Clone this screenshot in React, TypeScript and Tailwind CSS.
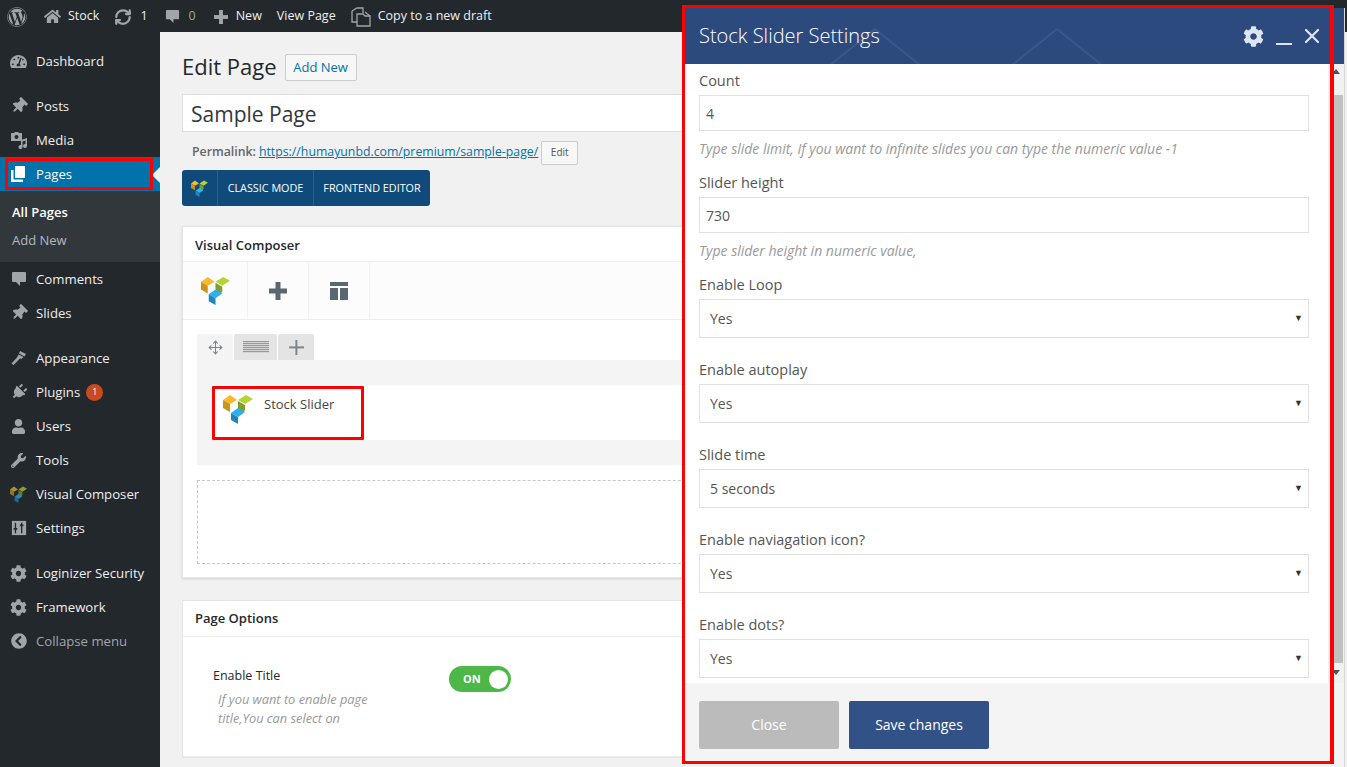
import type { ReactNode } from 'react'
import {
  FaWordpress, FaHome, FaThumbtack, FaPlug, FaUser, FaWrench, FaCog,
  FaTachometerAlt, FaChevronCircleLeft, FaPencilAlt,
} from 'react-icons/fa'
import { Move, RefreshCw, X } from 'lucide-react'

// Visual Composer cube logo
function VcLogo({ size = 30, dim = false }: { size?: number; dim?: boolean }) {
  return (
    <svg viewBox="0 0 30 30" width={size} height={size} className={dim ? 'opacity-70' : ''}>
      <path d="M0 6 L7 1 L14 6 L7 10 Z" fill="#fbb92d" />
      <path d="M0 6 L7 10 V18 L0 14 Z" fill="#c8951a" />
      <path d="M15 6 L23 1 L30 5 L22 10 Z" fill="#b5d334" />
      <path d="M15 7 L22 11 V16 L19 20 L15 17 Z" fill="#7f9f2c" />
      <path d="M8 19 L15 14 L22 18 L15 23 Z" fill="#2fb0ee" />
      <path d="M8 19 L15 23 V30 L8 26 Z" fill="#1d87bb" />
    </svg>
  )
}

function GridIcon() {
  return (
    <svg viewBox="0 0 18 18" width="18" height="18" fill="#5a6670">
      <rect x="0" y="0" width="18" height="4" />
      <rect x="0" y="6" width="8" height="12" />
      <rect x="10" y="6" width="8" height="12" />
    </svg>
  )
}

function SettingsIcon() {
  return (
    <svg viewBox="0 0 18 18" width="16" height="16">
      <rect width="16" height="16" x="1" y="1" fill="#a0a5aa" />
      <path d="M5 3v12M12 3v12" stroke="#23282d" strokeWidth="1.5" />
      <path d="M3 10h4M10 6h4" stroke="#23282d" strokeWidth="2" />
    </svg>
  )
}

function PagesIcon() {
  return (
    <svg viewBox="0 0 16 16" width="16" height="16" fill="#fff">
      <path d="M4 0h10v12H4z" />
      <path d="M0 4h2.5v9.5H12V16H0z" />
    </svg>
  )
}

function BubbleIcon({ size = 16 }: { size?: number }) {
  return (
    <svg viewBox="0 0 16 16" width={size} height={size} fill="#a0a5aa">
      <path d="M2 1h12a1 1 0 0 1 1 1v8a1 1 0 0 1-1 1H9v4l-4-4H2a1 1 0 0 1-1-1V2a1 1 0 0 1 1-1z" />
    </svg>
  )
}

function MediaIcon() {
  return (
    <svg viewBox="0 0 18 18" width="18" height="18" fill="#a0a5aa">
      <path d="M1 2h3l1-1h3l1 1h3v8H1z" />
      <circle cx="6.5" cy="6" r="2" fill="#23282d" />
      <path d="M11 9l6-2v8a2 2 0 1 1-1.5-1.9V9.5L12.5 10.5V16a2 2 0 1 1-1.5-1.9z" />
    </svg>
  )
}

function BrushIcon() {
  return (
    <svg viewBox="0 0 18 18" width="18" height="18" fill="#a0a5aa">
      <path d="M10 2l6 3-1.5 2.5-5.5-3z" />
      <path d="M8.5 5.5l5 2.5-2 2-1.5-.5L3.5 16 1.5 14.5 7 8.5z" />
    </svg>
  )
}

function CloneIcon() {
  return (
    <svg viewBox="0 0 20 20" width="20" height="20" fill="none" stroke="#a0a5aa" strokeWidth="1.3">
      <path d="M1 4l5-3h6v5" />
      <path d="M1 4v11h5" />
      <path d="M6 7h6l2 2h5v10H6z" />
      <path d="M14 5l5 4" />
    </svg>
  )
}

function PlusThin() {
  return (
    <svg viewBox="0 0 15 15" width="15" height="15" fill="currentColor">
      <rect x="6.4" y="0" width="2" height="15" />
      <rect x="0" y="6.4" width="15" height="2" />
    </svg>
  )
}

function PlusThick({ size = 18 }: { size?: number }) {
  return (
    <svg viewBox="0 0 18 18" width={size} height={size} fill="currentColor">
      <rect x="6.5" y="0" width="5" height="18" />
      <rect x="0" y="6.5" width="18" height="5" />
    </svg>
  )
}

function TrashIcon() {
  return (
    <svg viewBox="0 0 12 14" width="12" height="14" fill="none" stroke="currentColor" strokeWidth="2">
      <path d="M2 3v10h8V3" />
      <path d="M0 2h12M3 .8h6" strokeWidth="1.5" />
    </svg>
  )
}

interface NavItem {
  label: string
  icon: ReactNode
  gapBefore?: boolean
  badge?: string
  dim?: boolean
}

const icon = 'text-[#a0a5aa]'

const topNav: NavItem[] = [{ label: 'Dashboard', icon: <FaTachometerAlt size={17} className={icon} /> }]
const midNav: NavItem[] = [
  { label: 'Posts', icon: <FaThumbtack size={16} className={`${icon} rotate-45`} /> },
  { label: 'Media', icon: <MediaIcon /> },
]
const lowNav: NavItem[] = [
  { label: 'Comments', icon: <BubbleIcon /> },
  { label: 'Slides', icon: <FaThumbtack size={16} className={`${icon} rotate-45`} /> },
  { label: 'Appearance', icon: <BrushIcon />, gapBefore: true },
  { label: 'Plugins', icon: <FaPlug size={16} className={`${icon} rotate-45`} />, badge: '1' },
  { label: 'Users', icon: <FaUser size={15} className={icon} /> },
  { label: 'Tools', icon: <FaWrench size={15} className={icon} /> },
  { label: 'Visual Composer', icon: <VcLogo size={17} dim /> },
  { label: 'Settings', icon: <SettingsIcon /> },
  { label: 'Loginizer Security', icon: <FaCog size={17} className={icon} />, gapBefore: true },
  { label: 'Framework', icon: <FaCog size={17} className={icon} /> },
  { label: 'Collapse menu', icon: <FaChevronCircleLeft size={16} className={icon} />, dim: true },
]

function SideItem({ item }: { item: NavItem }) {
  return (
    <>
      {item.gapBefore && <div className="h-[11px]" />}
      <div className="flex h-[34px] items-center">
        <span className="flex w-[36px] shrink-0 justify-center pl-[1px]">{item.icon}</span>
        <span className={`pt-[2px] text-[13.2px] ${item.dim ? 'text-[#a0a5aa]' : 'text-[#eeeeee]'}`}>{item.label}</span>
        {item.badge && (
          <span className="ml-[6px] flex h-[17px] w-[17px] items-center justify-center rounded-full bg-[#ca4a1f] text-[9px] text-white">
            {item.badge}
          </span>
        )}
      </div>
    </>
  )
}

function Sidebar() {
  return (
    <aside className="w-[160px] shrink-0 bg-[#23282d] pt-[12px]">
      {topNav.map((n) => <SideItem key={n.label} item={n} />)}
      <div className="h-[11px]" />
      {midNav.map((n) => <SideItem key={n.label} item={n} />)}
      <div className="relative flex h-[34px] items-center bg-[#0073aa]">
        <span className="flex w-[36px] justify-center pl-[1px]"><PagesIcon /></span>
        <span className="pt-[2px] text-[13.2px] text-white">Pages</span>
        <span className="absolute right-0 top-[10px] h-0 w-0 border-y-[8px] border-r-[8px] border-y-transparent border-r-[#f1f1f1]" />
        <span className="absolute left-[5px] right-[7px] top-[1px] bottom-[1px] border-[3px] border-[#ff0000]" />
      </div>
      <div className="flex h-[71px] flex-col bg-[#32373c] pl-[12px] pt-[7px] text-[13px]">
        <span className="flex h-[28px] items-center pt-[2px] font-semibold text-white">All Pages</span>
        <span className="flex h-[28px] items-center pt-[2px] text-[#b4b9be]">Add New</span>
      </div>
      {lowNav.map((n) => <SideItem key={n.label} item={n} />)}
    </aside>
  )
}

function TopBar() {
  return (
    <header className="flex h-[32px] items-center bg-[#23282d] pt-[1px] text-[12.5px] text-[#eeeeee]">
      <span className="ml-[7px] text-[#a0a5aa]"><FaWordpress size={20} /></span>
      <span className="ml-[17px] text-[#a0a5aa]"><FaHome size={17} /></span>
      <span className="ml-[7px]">Stock</span>
      <span className="ml-[15px] text-[#a0a5aa]"><RefreshCw size={18} strokeWidth={3} /></span>
      <span className="ml-[8px]">1</span>
      <span className="ml-[17px]"><BubbleIcon size={15} /></span>
      <span className="ml-[9px] text-[#a0a5aa]">0</span>
      <span className="ml-[18px] text-[#a0a5aa]"><PlusThick size={14} /></span>
      <span className="ml-[8px]">New</span>
      <span className="ml-[15px]">View Page</span>
      <span className="ml-[15px]"><CloneIcon /></span>
      <span className="ml-[7px]">Copy to a new draft</span>
    </header>
  )
}

function Composer() {
  return (
    <section className="mt-[20px] border border-[#e5e5e5] bg-white shadow-sm">
      <h2 className="flex h-[35px] items-center border-b border-[#eeeeee] pl-[12px] pt-[3px] text-[13px] font-semibold text-[#23282d]">
        Visual Composer
      </h2>
      <div className="flex h-[58px] border-b border-[#eeeeee] bg-[#fcfcfc]">
        <span className="flex w-[65px] items-center justify-center border-r border-[#f1f1f1]"><VcLogo size={29} /></span>
        <span className="flex w-[61px] items-center justify-center border-r border-[#f1f1f1] text-[#5a6670]"><PlusThick /></span>
        <span className="flex w-[61px] items-center justify-center border-r border-[#f1f1f1]"><GridIcon /></span>
      </div>
      <div className="px-[14px] pt-[14px] pb-[13px]">
        <div className="flex h-[26px]">
          <span className="flex w-[36px] items-center justify-center rounded-t-[2px] bg-[#f4f4f4] text-[#7d868e]"><Move size={15} strokeWidth={1.7} /></span>
          <span className="ml-[1px] flex w-[43px] items-center justify-center rounded-t-[2px] bg-[#e4e4e4]">
            <span className="h-[12px] w-[26px] bg-[repeating-linear-gradient(#9a9a9a_0,#9a9a9a_1px,#d4d4d4_1px,#d4d4d4_2px)]" />
          </span>
          <span className="ml-[1px] flex w-[36px] items-center justify-center rounded-t-[2px] bg-[#e4e4e4] text-[#7d868e]">
            <PlusThin />
          </span>
        </div>
        <div className="bg-[#f4f4f4]">
          <div className="flex h-[25px] items-center justify-end pr-[48px] text-[#7d868e]">
            <PlusThin />
            <FaPencilAlt size={14} className="ml-[5px]" />
            <span className="ml-[6px]"><TrashIcon /></span>
          </div>
          <div className="relative ml-[15px] h-[55px] bg-white">
            <div className="flex h-full items-start pl-[11px] pt-[9px]">
              <VcLogo size={30} />
              <span className="ml-[11px] mt-[1px] text-[13px] text-[#444444]">Stock Slider</span>
            </div>
            <span className="absolute top-[1px] left-0 h-[54px] w-[152px] rounded-[1px] border-[3px] border-[#ff0000]" />
          </div>
          <div className="flex h-[25px] items-center justify-end pr-[68px] text-[#7d868e]">
            <PlusThin />
          </div>
        </div>
        <div className="mt-[15px] flex h-[84px] items-center justify-end border border-dashed border-[#c8c8c8] pr-[57px]">
          <span className="flex h-[38px] w-[39px] items-center justify-center rounded-[3px] bg-[#c9c9c9] text-white"><PlusThin /></span>
        </div>
      </div>
    </section>
  )
}

function PageOptions() {
  return (
    <section className="mt-[22px] border border-[#e5e5e5] bg-white">
      <h2 className="flex h-[36px] items-center border-b border-[#eeeeee] pl-[12px] text-[13px] font-semibold text-[#23282d]">
        Page Options
      </h2>
      <div className="flex h-[120px] border-b border-[#eeeeee] pl-[30px] pt-[29px]">
        <div className="w-[236px]">
          <div className="text-[12.5px] font-medium leading-[20px] text-[#23282d]">Enable Title</div>
          <p className="mt-[4px] ml-[5px] w-[175px] text-[12.8px] italic leading-[19px] text-[#999999]">
            If you want to enable page title,You can select on
          </p>
        </div>
        <div className="flex h-[26px] w-[62px] items-center rounded-full bg-[#4db848] pl-[14px] text-[11px] font-bold text-white">
          ON
          <span className="ml-auto mr-[3px] h-[19px] w-[19px] rounded-full bg-white" />
        </div>
      </div>
    </section>
  )
}

function EditPage() {
  return (
    <main className="min-w-0 flex-1 overflow-hidden bg-[#f1f1f1] pl-[22px] pr-[20px]">
      <div className="flex items-center pt-[21px]">
        <h1 className="pb-[2px] text-[22px] leading-[27px] text-[#23282d]">Edit Page</h1>
        <span className="ml-[8px] flex h-[27px] w-[72px] items-center justify-center rounded-[2px] border border-[#cccccc] bg-[#f7f7f7] text-[13px] font-medium text-[#0073aa]">
          Add New
        </span>
      </div>
      <div className="mt-[12px] flex h-[38px] items-center border border-[#dddddd] bg-white pl-[8px] pt-[3px] text-[21px] text-[#32373c]">
        Sample Page
      </div>
      <div className="mt-[7px] flex h-[26px] items-center pl-[10px] pt-[1px] text-[12.3px] text-[#666666]">
        <span className="font-semibold">Permalink:</span>
        <span className="ml-[3px] text-[#0073aa] underline">https://humayunbd.com/premium/sample-page/</span>
        <span className="ml-[3px] flex h-[24px] w-[37px] items-center justify-center rounded-[2px] border border-[#cccccc] bg-[#f7f7f7] text-[10px] text-[#555555]">Edit</span>
      </div>
      <div className="mt-[5px] flex h-[36px] w-[248px] items-center rounded-[3px] bg-[#0f4a7b] text-[10.8px] font-medium text-white">
        <span className="flex h-full w-[36px] items-center justify-center border-r border-[#2a6190]"><VcLogo size={17} /></span>
        <span className="flex h-full w-[96px] items-center justify-center border-r border-[#2a6190]">CLASSIC MODE</span>
        <span className="flex h-full flex-1 items-center justify-center">FRONTEND EDITOR</span>
      </div>
      <Composer />
      <PageOptions />
    </main>
  )
}

function Field({ label, value, hint }: { label: string; value: string; hint: string }) {
  return (
    <div className="mb-[14px]">
      <label className="block text-[14.5px] leading-[20px] text-[#555555]">{label}</label>
      <div className="mt-[4px] flex h-[36px] items-center border border-[#e1e1e1] bg-white pl-[6px] text-[14px] text-[#555555]">{value}</div>
      <p className="mt-[8px] text-[14px] italic leading-[20px] text-[#999999]">{hint}</p>
    </div>
  )
}

function SelectField({ label, value }: { label: string; value: string }) {
  return (
    <div className="mb-[22px]">
      <label className="block text-[14.5px] leading-[20px] text-[#555555]">{label}</label>
      <div className="mt-[4px] flex h-[39px] items-center justify-between border border-[#e1e1e1] bg-white pl-[10px] pr-[5px] text-[14px] text-[#555555]">
        {value}
        <span className="mb-[2px] text-[9px] text-[#333333]">▼</span>
      </div>
    </div>
  )
}

function SettingsModal() {
  return (
    <div className="absolute left-[685px] top-[8px] flex h-[759px] w-[660px] flex-col border-r border-[#d8d8d8] bg-white">
      <div className="relative flex h-[56px] shrink-0 items-center overflow-hidden bg-[#2d4a7f] pl-[14px] text-white">
        <svg className="absolute left-[145px] top-[20px]" width="300" height="36" fill="none" stroke="#3a5788" strokeWidth="2">
          <path d="M0 37 L45 1 L90 37" />
          <path d="M182 37 L227 1 L272 37" />
        </svg>
        <span className="relative pb-[1px] text-[20px] font-light">Stock Slider Settings</span>
        <span className="relative ml-[363px] flex items-center text-[#dfe5f0]">
          <FaCog size={21} />
          <span className="ml-[12px] mt-[15px] h-[2px] w-[16px] bg-[#dfe5f0]" />
          <X size={24} strokeWidth={2.2} className="ml-[8px]" />
        </span>
      </div>
      <div className="flex min-h-0 flex-1">
        <div className="w-[643px] shrink-0 overflow-hidden pl-[14px] pr-[19px] pt-[7px]">
          <Field label="Count" value="4" hint="Type slide limit, If you want to infinite slides you can type the numeric value -1" />
          <Field label="Slider height" value="730" hint="Type slider height in numeric value," />
          <SelectField label="Enable Loop" value="Yes" />
          <SelectField label="Enable autoplay" value="Yes" />
          <SelectField label="Slide time" value="5 seconds" />
          <SelectField label="Enable naviagation icon?" value="Yes" />
          <SelectField label="Enable dots?" value="Yes" />
        </div>
        <div className="flex flex-1 flex-col items-center bg-[#f1f1f1]">
          <span className="mt-[5px] h-0 w-0 border-x-[4px] border-b-[5px] border-x-transparent border-b-[#505050]" />
          <span className="ml-[1px] mt-[21px] h-[568px] w-[13px] bg-[#c1c1c1]" />
          <span className="mt-[7px] h-0 w-0 border-x-[4px] border-t-[5px] border-x-transparent border-t-[#505050]" />
        </div>
      </div>
      <div className="flex h-[84px] shrink-0 items-start bg-[#f4f4f4] pl-[14px] pt-[18px]">
        <span className="flex h-[48px] w-[140px] items-center justify-center rounded-[2px] bg-[#bbbbbb] pb-[2px] text-[14px] text-white">Close</span>
        <span className="ml-[10px] flex h-[48px] w-[140px] items-center justify-center rounded-[2px] bg-[#325287] pb-[2px] text-[14px] text-white">Save changes</span>
      </div>
    </div>
  )
}

export default function App() {
  return (
    <div className="relative h-[767px] w-[1347px] overflow-hidden bg-[#f1f1f1] font-['Open_Sans',sans-serif]">
      <TopBar />
      <div className="flex h-[735px]">
        <Sidebar />
        <EditPage />
      </div>
      <SettingsModal />
      {/* red annotation round the dialog */}
      <div className="absolute left-[682px] top-[5px] h-[759px] w-[652px] border-[3px] border-r-[4px] border-[#ff0000]" />
    </div>
  )
}
